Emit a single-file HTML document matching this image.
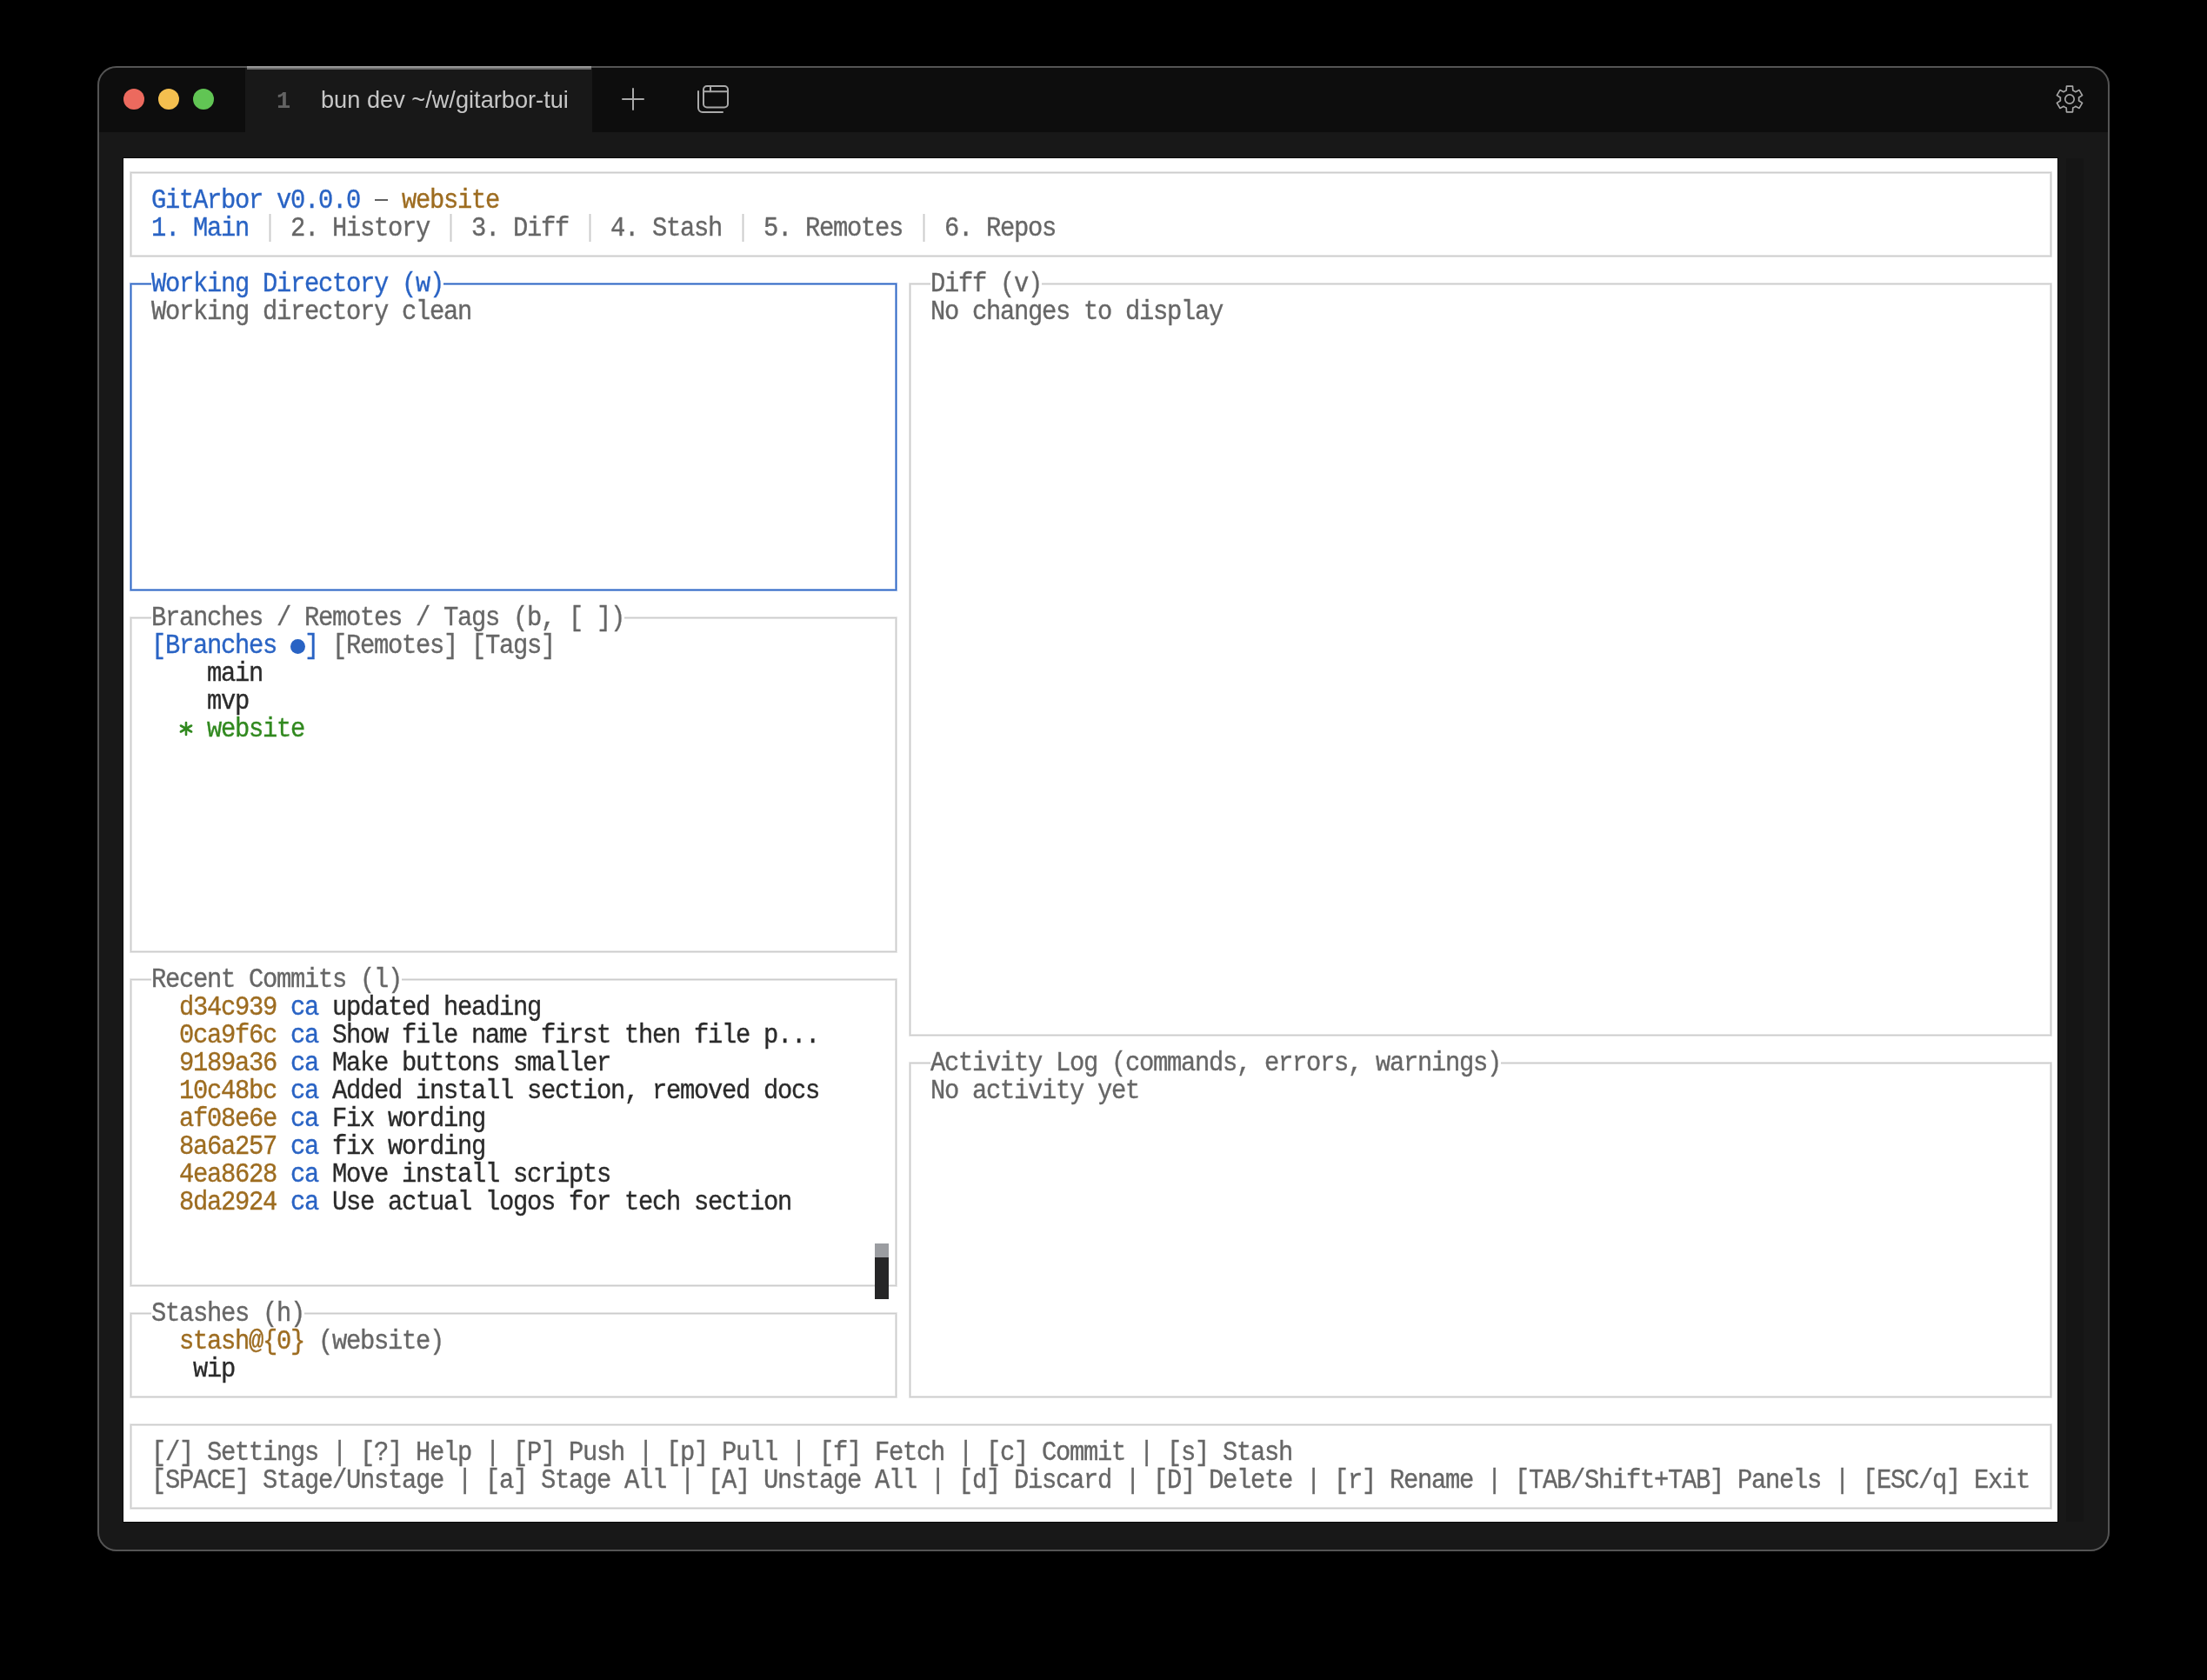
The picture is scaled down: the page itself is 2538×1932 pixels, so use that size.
<!DOCTYPE html>
<html><head><meta charset="utf-8"><style>
html,body{margin:0;padding:0;}
body{width:2538px;height:1932px;background:#000;position:relative;overflow:hidden;}
div,span,svg{position:absolute;}
.t{font-family:"Liberation Mono",monospace;font-size:31.0px;line-height:32px;letter-spacing:-1.3802px;white-space:pre;transform:scaleX(0.929);transform-origin:0 0;-webkit-text-stroke:0.35px currentColor;}
#win{left:112px;top:76px;width:2314px;height:1708px;border-radius:22px;background:#181818;overflow:hidden;}
#winb{left:112px;top:76px;width:2314px;height:1708px;border-radius:22px;box-sizing:border-box;border:2px solid #545454;}
#term{left:142px;top:182px;width:2224px;height:1568px;background:#fff;box-shadow:0 0 0 1px #0a0a0a;}
</style></head><body>
<div id="win">
<div style="left:0;top:0;width:2314px;height:76px;background:#0d0d0d"></div>
<div style="left:170px;top:0;width:399px;height:76px;background:#181818"></div>
</div>
<div id="winb"></div>
<div style="left:284px;top:76px;width:396px;height:2px;background:#979797"></div>
<div style="left:284px;top:78px;width:396px;height:2px;background:#6a6a6a"></div>
<div style="left:142px;top:102px;width:24px;height:24px;border-radius:50%;background:#ec6a5e"></div>
<div style="left:182px;top:102px;width:24px;height:24px;border-radius:50%;background:#f4bf4f"></div>
<div style="left:222px;top:102px;width:24px;height:24px;border-radius:50%;background:#61c554"></div>
<span style="left:318px;top:99px;font-family:'Liberation Mono',monospace;font-weight:bold;font-size:27px;line-height:36px;color:#636363;will-change:transform">1</span>
<span style="left:369px;top:97px;font-family:'Liberation Sans',sans-serif;font-size:27.2px;line-height:36px;color:#c6c6c6;white-space:pre;will-change:transform">bun dev ~/w/gitarbor-tui</span>
<svg style="left:700px;top:90px" width="160" height="50" viewBox="700 90 160 50">
<g stroke="#a9a9a9" stroke-width="2" fill="none" stroke-linecap="round">
<line x1="716" y1="114" x2="740" y2="114"/>
<line x1="728" y1="102" x2="728" y2="126"/>
<rect x="809" y="99" width="28" height="24.5" rx="4"/>
<line x1="809" y1="105.2" x2="837" y2="105.2"/>
<line x1="817" y1="99" x2="817" y2="105.2"/>
<path d="M803 105 V124 a5 5 0 0 0 5 5 H831"/>
</g></svg>
<svg style="left:2350px;top:84px" width="60" height="60" viewBox="-30 -30 60 60">
<path d="M-3.80 -10.00 L-3.50 -14.80 L3.50 -14.80 L3.80 -10.00 A10.70 10.70 0 0 1 6.76 -8.29 L11.07 -10.43 L14.57 -4.37 L10.56 -1.71 A10.70 10.70 0 0 1 10.56 1.71 L14.57 4.37 L11.07 10.43 L6.76 8.29 A10.70 10.70 0 0 1 3.80 10.00 L3.50 14.80 L-3.50 14.80 L-3.80 10.00 A10.70 10.70 0 0 1 -6.76 8.29 L-11.07 10.43 L-14.57 4.37 L-10.56 1.71 A10.70 10.70 0 0 1 -10.56 -1.71 L-14.57 -4.37 L-11.07 -10.43 L-6.76 -8.29 A10.70 10.70 0 0 1 -3.80 -10.00 Z" stroke="#a6a6a6" stroke-width="1.7" fill="none" stroke-linejoin="round"/>
<circle cx="0" cy="0" r="5.2" stroke="#a6a6a6" stroke-width="1.7" fill="none"/>
</svg>
<div id="term"></div>
<div style="left:2376px;top:182px;width:20px;height:1568px;background:#151515"></div>
<div style="left:0;top:0;width:2538px;height:1932px;will-change:transform">
<div style="left:149px;top:197px;width:3px;height:99px;background:#e6e6e6"></div>
<div style="left:2357px;top:197px;width:3px;height:99px;background:#e6e6e6"></div>
<div style="left:149px;top:293px;width:2211px;height:3px;background:#e6e6e6"></div>
<div style="left:149px;top:197px;width:2211px;height:3px;background:#e6e6e6"></div>
<div style="left:149px;top:325px;width:3px;height:355px;background:#94b1e2"></div>
<div style="left:1029px;top:325px;width:3px;height:355px;background:#94b1e2"></div>
<div style="left:149px;top:677px;width:883px;height:3px;background:#94b1e2"></div>
<div style="left:149px;top:325px;width:25px;height:3px;background:#94b1e2"></div>
<div style="left:510px;top:325px;width:522px;height:3px;background:#94b1e2"></div>
<div style="left:149px;top:709px;width:3px;height:387px;background:#e6e6e6"></div>
<div style="left:1029px;top:709px;width:3px;height:387px;background:#e6e6e6"></div>
<div style="left:149px;top:1093px;width:883px;height:3px;background:#e6e6e6"></div>
<div style="left:149px;top:709px;width:25px;height:3px;background:#e6e6e6"></div>
<div style="left:718px;top:709px;width:314px;height:3px;background:#e6e6e6"></div>
<div style="left:149px;top:1125px;width:3px;height:355px;background:#e6e6e6"></div>
<div style="left:1029px;top:1125px;width:3px;height:355px;background:#e6e6e6"></div>
<div style="left:149px;top:1477px;width:883px;height:3px;background:#e6e6e6"></div>
<div style="left:149px;top:1125px;width:25px;height:3px;background:#e6e6e6"></div>
<div style="left:462px;top:1125px;width:570px;height:3px;background:#e6e6e6"></div>
<div style="left:149px;top:1509px;width:3px;height:99px;background:#e6e6e6"></div>
<div style="left:1029px;top:1509px;width:3px;height:99px;background:#e6e6e6"></div>
<div style="left:149px;top:1605px;width:883px;height:3px;background:#e6e6e6"></div>
<div style="left:149px;top:1509px;width:25px;height:3px;background:#e6e6e6"></div>
<div style="left:350px;top:1509px;width:682px;height:3px;background:#e6e6e6"></div>
<div style="left:1045px;top:325px;width:3px;height:867px;background:#e6e6e6"></div>
<div style="left:2357px;top:325px;width:3px;height:867px;background:#e6e6e6"></div>
<div style="left:1045px;top:1189px;width:1315px;height:3px;background:#e6e6e6"></div>
<div style="left:1045px;top:325px;width:25px;height:3px;background:#e6e6e6"></div>
<div style="left:1198px;top:325px;width:1162px;height:3px;background:#e6e6e6"></div>
<div style="left:1045px;top:1221px;width:3px;height:387px;background:#e6e6e6"></div>
<div style="left:2357px;top:1221px;width:3px;height:387px;background:#e6e6e6"></div>
<div style="left:1045px;top:1605px;width:1315px;height:3px;background:#e6e6e6"></div>
<div style="left:1045px;top:1221px;width:25px;height:3px;background:#e6e6e6"></div>
<div style="left:1726px;top:1221px;width:634px;height:3px;background:#e6e6e6"></div>
<div style="left:149px;top:1637px;width:3px;height:99px;background:#e6e6e6"></div>
<div style="left:2357px;top:1637px;width:3px;height:99px;background:#e6e6e6"></div>
<div style="left:149px;top:1733px;width:2211px;height:3px;background:#e6e6e6"></div>
<div style="left:149px;top:1637px;width:2211px;height:3px;background:#e6e6e6"></div>
<div style="left:309px;top:246px;width:3px;height:32px;background:#e6e6e6"></div>
<div style="left:517px;top:246px;width:3px;height:32px;background:#e6e6e6"></div>
<div style="left:677px;top:246px;width:3px;height:32px;background:#e6e6e6"></div>
<div style="left:853px;top:246px;width:3px;height:32px;background:#e6e6e6"></div>
<div style="left:1061px;top:246px;width:3px;height:32px;background:#e6e6e6"></div>
<div style="left:150px;top:198px;width:1px;height:97px;background:#cccccc"></div>
<div style="left:2358px;top:198px;width:1px;height:97px;background:#cccccc"></div>
<div style="left:150px;top:294px;width:2209px;height:1px;background:#cccccc"></div>
<div style="left:150px;top:198px;width:2209px;height:1px;background:#cccccc"></div>
<div style="left:150px;top:326px;width:1px;height:353px;background:#2963c4"></div>
<div style="left:1030px;top:326px;width:1px;height:353px;background:#2963c4"></div>
<div style="left:150px;top:678px;width:881px;height:1px;background:#2963c4"></div>
<div style="left:150px;top:326px;width:24px;height:1px;background:#2963c4"></div>
<div style="left:510px;top:326px;width:521px;height:1px;background:#2963c4"></div>
<div style="left:150px;top:710px;width:1px;height:385px;background:#cccccc"></div>
<div style="left:1030px;top:710px;width:1px;height:385px;background:#cccccc"></div>
<div style="left:150px;top:1094px;width:881px;height:1px;background:#cccccc"></div>
<div style="left:150px;top:710px;width:24px;height:1px;background:#cccccc"></div>
<div style="left:718px;top:710px;width:313px;height:1px;background:#cccccc"></div>
<div style="left:150px;top:1126px;width:1px;height:353px;background:#cccccc"></div>
<div style="left:1030px;top:1126px;width:1px;height:353px;background:#cccccc"></div>
<div style="left:150px;top:1478px;width:881px;height:1px;background:#cccccc"></div>
<div style="left:150px;top:1126px;width:24px;height:1px;background:#cccccc"></div>
<div style="left:462px;top:1126px;width:569px;height:1px;background:#cccccc"></div>
<div style="left:150px;top:1510px;width:1px;height:97px;background:#cccccc"></div>
<div style="left:1030px;top:1510px;width:1px;height:97px;background:#cccccc"></div>
<div style="left:150px;top:1606px;width:881px;height:1px;background:#cccccc"></div>
<div style="left:150px;top:1510px;width:24px;height:1px;background:#cccccc"></div>
<div style="left:350px;top:1510px;width:681px;height:1px;background:#cccccc"></div>
<div style="left:1046px;top:326px;width:1px;height:865px;background:#cccccc"></div>
<div style="left:2358px;top:326px;width:1px;height:865px;background:#cccccc"></div>
<div style="left:1046px;top:1190px;width:1313px;height:1px;background:#cccccc"></div>
<div style="left:1046px;top:326px;width:24px;height:1px;background:#cccccc"></div>
<div style="left:1198px;top:326px;width:1161px;height:1px;background:#cccccc"></div>
<div style="left:1046px;top:1222px;width:1px;height:385px;background:#cccccc"></div>
<div style="left:2358px;top:1222px;width:1px;height:385px;background:#cccccc"></div>
<div style="left:1046px;top:1606px;width:1313px;height:1px;background:#cccccc"></div>
<div style="left:1046px;top:1222px;width:24px;height:1px;background:#cccccc"></div>
<div style="left:1726px;top:1222px;width:633px;height:1px;background:#cccccc"></div>
<div style="left:150px;top:1638px;width:1px;height:97px;background:#cccccc"></div>
<div style="left:2358px;top:1638px;width:1px;height:97px;background:#cccccc"></div>
<div style="left:150px;top:1734px;width:2209px;height:1px;background:#cccccc"></div>
<div style="left:150px;top:1638px;width:2209px;height:1px;background:#cccccc"></div>
<div style="left:310px;top:246px;width:1px;height:32px;background:#cccccc"></div>
<div style="left:518px;top:246px;width:1px;height:32px;background:#cccccc"></div>
<div style="left:678px;top:246px;width:1px;height:32px;background:#cccccc"></div>
<div style="left:854px;top:246px;width:1px;height:32px;background:#cccccc"></div>
<div style="left:1062px;top:246px;width:1px;height:32px;background:#cccccc"></div>
<span class="t" style="left:174px;top:311.0px;color:#2963c4">Working Directory (w)</span>
<span class="t" style="left:174px;top:695.0px;color:#666666">Branches / Remotes / Tags (b, [ ])</span>
<span class="t" style="left:174px;top:1111.0px;color:#666666">Recent Commits (l)</span>
<span class="t" style="left:174px;top:1495.0px;color:#666666">Stashes (h)</span>
<span class="t" style="left:1070px;top:311.0px;color:#666666">Diff (v)</span>
<span class="t" style="left:1070px;top:1207.0px;color:#666666">Activity Log (commands, errors, warnings)</span>
<span class="t" style="left:174px;top:215.0px;color:#2963c4">GitArbor v0.0.0</span>
<div style="left:431px;top:229px;width:15px;height:2px;background:#606060;"></div>
<span class="t" style="left:462px;top:215.0px;color:#9d6c20">website</span>
<span class="t" style="left:174px;top:247.0px;color:#2963c4">1. Main</span>
<span class="t" style="left:334px;top:247.0px;color:#666666">2. History</span>
<span class="t" style="left:542px;top:247.0px;color:#666666">3. Diff</span>
<span class="t" style="left:702px;top:247.0px;color:#666666">4. Stash</span>
<span class="t" style="left:878px;top:247.0px;color:#666666">5. Remotes</span>
<span class="t" style="left:1086px;top:247.0px;color:#666666">6. Repos</span>
<span class="t" style="left:174px;top:343.0px;color:#666666">Working directory clean</span>
<span class="t" style="left:174px;top:727.0px;color:#2963c4">[Branches</span>
<div style="left:334px;top:735px;width:17px;height:17px;border-radius:50%;background:#2963c4"></div>
<span class="t" style="left:350px;top:727.0px;color:#2963c4">]</span>
<span class="t" style="left:382px;top:727.0px;color:#666666">[Remotes] [Tags]</span>
<span class="t" style="left:238px;top:759.0px;color:#2a2a2a">main</span>
<span class="t" style="left:238px;top:791.0px;color:#2a2a2a">mvp</span>
<span class="t" style="left:238px;top:823.0px;color:#31891f">website</span>
<svg style="left:200px;top:824px" width="30" height="30" viewBox="200 824 30 30"><g stroke="#31891f" stroke-width="2.6" stroke-linecap="round"><line x1="214" y1="831" x2="214" y2="845"/><line x1="207.9" y1="834.5" x2="220.1" y2="841.5"/><line x1="207.9" y1="841.5" x2="220.1" y2="834.5"/></g></svg>
<span class="t" style="left:206px;top:1143.0px;color:#9d6c20">d34c939</span>
<span class="t" style="left:334px;top:1143.0px;color:#2963c4">ca</span>
<span class="t" style="left:382px;top:1143.0px;color:#2a2a2a">updated heading</span>
<span class="t" style="left:206px;top:1175.0px;color:#9d6c20">0ca9f6c</span>
<span class="t" style="left:334px;top:1175.0px;color:#2963c4">ca</span>
<span class="t" style="left:382px;top:1175.0px;color:#2a2a2a">Show file name first then file p...</span>
<span class="t" style="left:206px;top:1207.0px;color:#9d6c20">9189a36</span>
<span class="t" style="left:334px;top:1207.0px;color:#2963c4">ca</span>
<span class="t" style="left:382px;top:1207.0px;color:#2a2a2a">Make buttons smaller</span>
<span class="t" style="left:206px;top:1239.0px;color:#9d6c20">10c48bc</span>
<span class="t" style="left:334px;top:1239.0px;color:#2963c4">ca</span>
<span class="t" style="left:382px;top:1239.0px;color:#2a2a2a">Added install section, removed docs</span>
<span class="t" style="left:206px;top:1271.0px;color:#9d6c20">af08e6e</span>
<span class="t" style="left:334px;top:1271.0px;color:#2963c4">ca</span>
<span class="t" style="left:382px;top:1271.0px;color:#2a2a2a">Fix wording</span>
<span class="t" style="left:206px;top:1303.0px;color:#9d6c20">8a6a257</span>
<span class="t" style="left:334px;top:1303.0px;color:#2963c4">ca</span>
<span class="t" style="left:382px;top:1303.0px;color:#2a2a2a">fix wording</span>
<span class="t" style="left:206px;top:1335.0px;color:#9d6c20">4ea8628</span>
<span class="t" style="left:334px;top:1335.0px;color:#2963c4">ca</span>
<span class="t" style="left:382px;top:1335.0px;color:#2a2a2a">Move install scripts</span>
<span class="t" style="left:206px;top:1367.0px;color:#9d6c20">8da2924</span>
<span class="t" style="left:334px;top:1367.0px;color:#2963c4">ca</span>
<span class="t" style="left:382px;top:1367.0px;color:#2a2a2a">Use actual logos for tech section</span>
<div style="left:1006px;top:1430px;width:16px;height:16px;background:#9b9da1;"></div>
<div style="left:1006px;top:1446px;width:16px;height:48px;background:#262627;"></div>
<span class="t" style="left:206px;top:1527.0px;color:#9d6c20">stash@{0}</span>
<span class="t" style="left:366px;top:1527.0px;color:#666666">(website)</span>
<span class="t" style="left:222px;top:1559.0px;color:#2a2a2a">wip</span>
<span class="t" style="left:1070px;top:343.0px;color:#666666">No changes to display</span>
<span class="t" style="left:1070px;top:1239.0px;color:#666666">No activity yet</span>
<span class="t" style="left:174px;top:1655.0px;color:#666666">[/] Settings | [?] Help | [P] Push | [p] Pull | [f] Fetch | [c] Commit | [s] Stash</span>
<span class="t" style="left:174px;top:1687.0px;color:#666666">[SPACE] Stage/Unstage | [a] Stage All | [A] Unstage All | [d] Discard | [D] Delete | [r] Rename | [TAB/Shift+TAB] Panels | [ESC/q] Exit</span>
</div>
</body></html>
